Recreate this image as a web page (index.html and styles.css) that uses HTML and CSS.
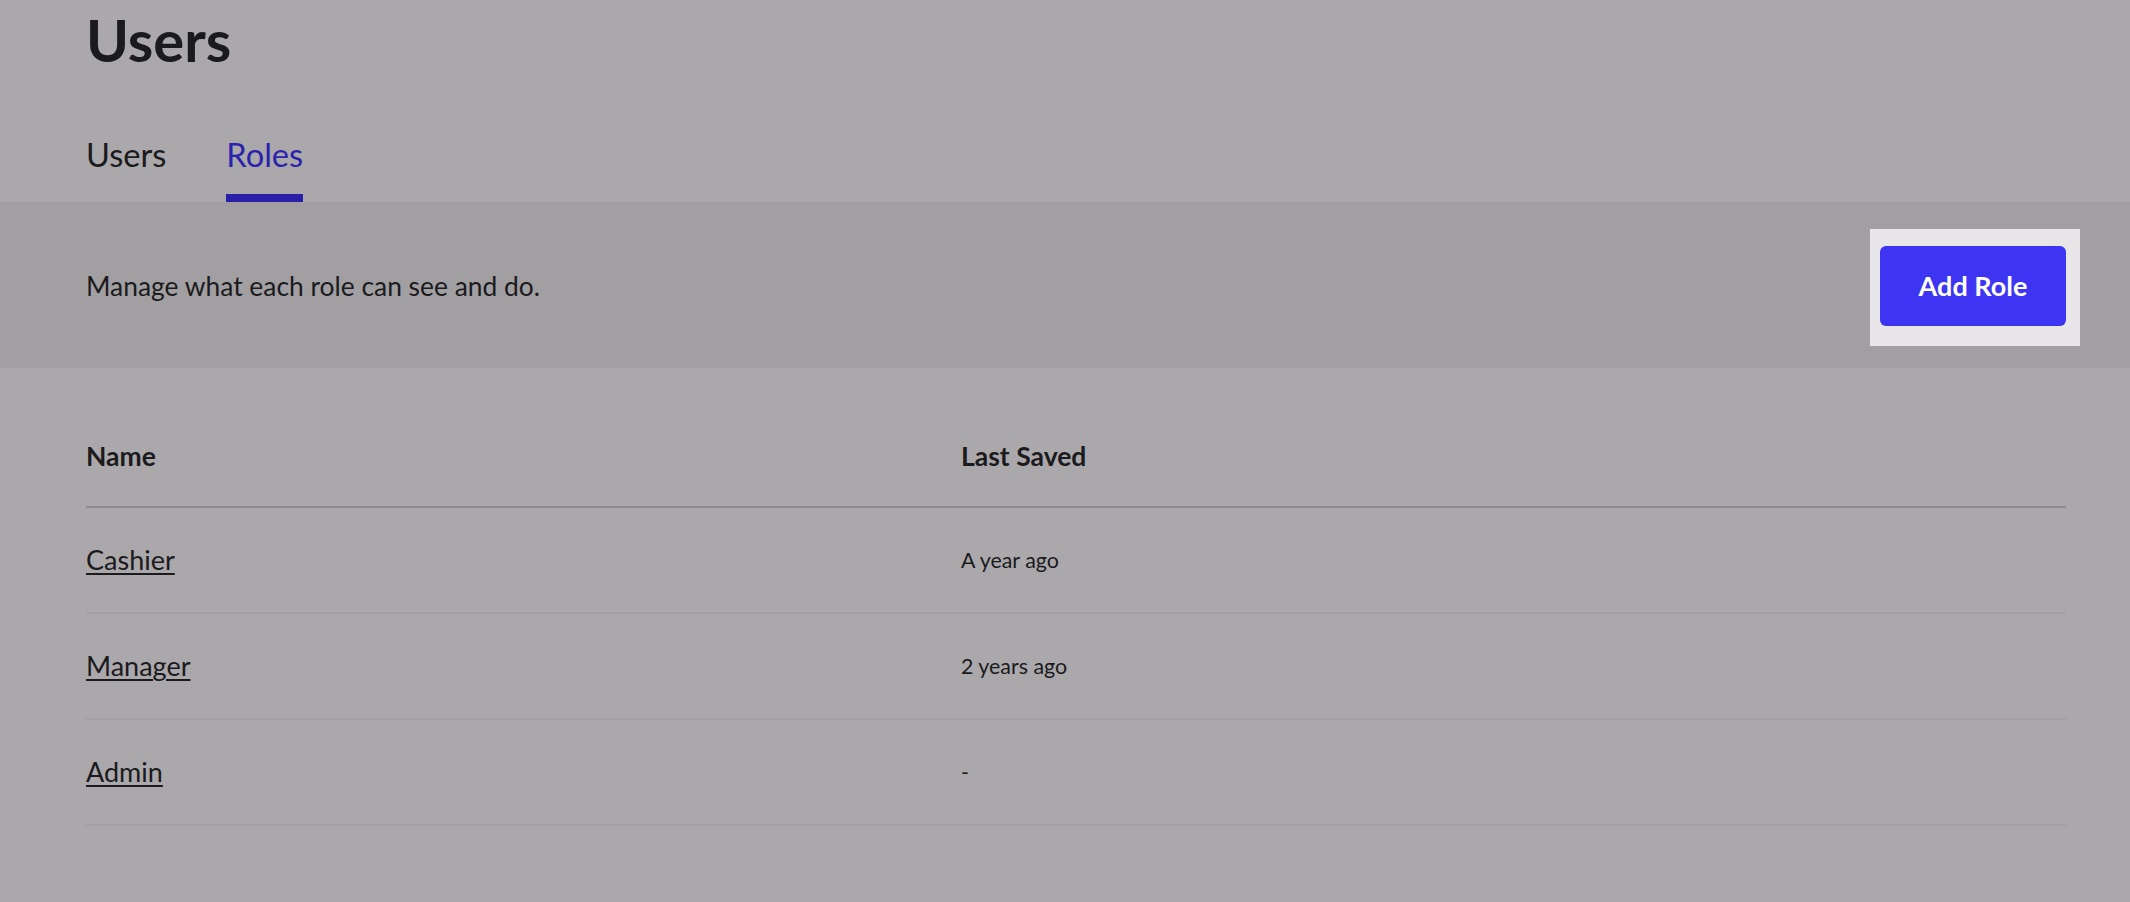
FILE: index.html
```html
<!DOCTYPE html>
<html lang="en">
<head>
    <meta charset="UTF-8">
    <meta name="viewport" content="width=device-width, initial-scale=1.0">
    <title>Users</title>
    <link rel="stylesheet" href="styles.css">
</head>
<body>
    <header class="page-head">
        <h1>Users</h1>
        <nav class="tabs">
            <a class="tab" href="#">Users</a>
            <a class="tab active" href="#">Roles</a>
        </nav>
    </header>

    <section class="band">
        <p class="band-text">Manage what each role can see and do.</p>
        <div class="spot">
            <button class="add-btn" type="button">Add Role</button>
        </div>
    </section>

    <section class="roles">
        <div class="row head">
            <div>Name</div>
            <div>Last Saved</div>
        </div>
        <div class="row">
            <a class="role-link" href="#">Cashier</a>
            <span class="saved">A year ago</span>
        </div>
        <div class="row">
            <a class="role-link" href="#">Manager</a>
            <span class="saved">2 years ago</span>
        </div>
        <div class="row">
            <a class="role-link" href="#">Admin</a>
            <span class="saved">-</span>
        </div>
    </section>
</body>
</html>
```

FILE: styles.css
```css
body {
    margin: 0;
    background: #aaa8ab;
    color: #1b1a1d;
    font-family: Lato, "Noto Sans", sans-serif;
}

.page-head {
    padding: 5px 64px 0 86px;
}

h1 {
    margin: 0;
    font-size: 58px;
    font-weight: 700;
    line-height: 1.2;
}

.tabs {
    display: flex;
    gap: 60px;
    margin-top: 61px;
}

.tab {
    font-size: 32.6px;
    line-height: 38px;
    color: #1b1a1d;
    text-decoration: none;
    padding-bottom: 20px;
    border-bottom: 8px solid transparent;
}

.tab.active {
    color: #2b23ad;
    border-bottom-color: #2a20a8;
}

.band {
    display: flex;
    justify-content: space-between;
    align-items: center;
    background: #a19fa2;
    padding: 27px 64px 22px 86px;
}

.band-text {
    margin: 0 0 3px;
    font-size: 26.4px;
}

.spot {
    background: #e8e6e9;
    padding: 17px 14px 20px 10px;
    margin-right: -14px;
}

.add-btn {
    display: block;
    width: 186px;
    height: 80px;
    border: 0;
    border-radius: 6px;
    background: #3d35f2;
    color: #fff;
    font-family: Lato, "Noto Sans", sans-serif;
    font-size: 27px;
    font-weight: 700;
}

.roles {
    padding: 73px 64px 0 86px;
}

.row {
    display: grid;
    grid-template-columns: 875px 1fr;
    align-items: center;
    height: 104px;
    border-bottom: 2px solid #a2a0a3;
}

.row.head {
    height: auto;
    padding-bottom: 34px;
    border-bottom-color: #8d8b8e;
    font-size: 26.5px;
    font-weight: 700;
    line-height: 31px;
}

.role-link {
    font-size: 27px;
    color: #1b1a1d;
    text-decoration-thickness: 2px;
    text-underline-offset: 3px;
}

.saved {
    font-size: 21.4px;
}
```
